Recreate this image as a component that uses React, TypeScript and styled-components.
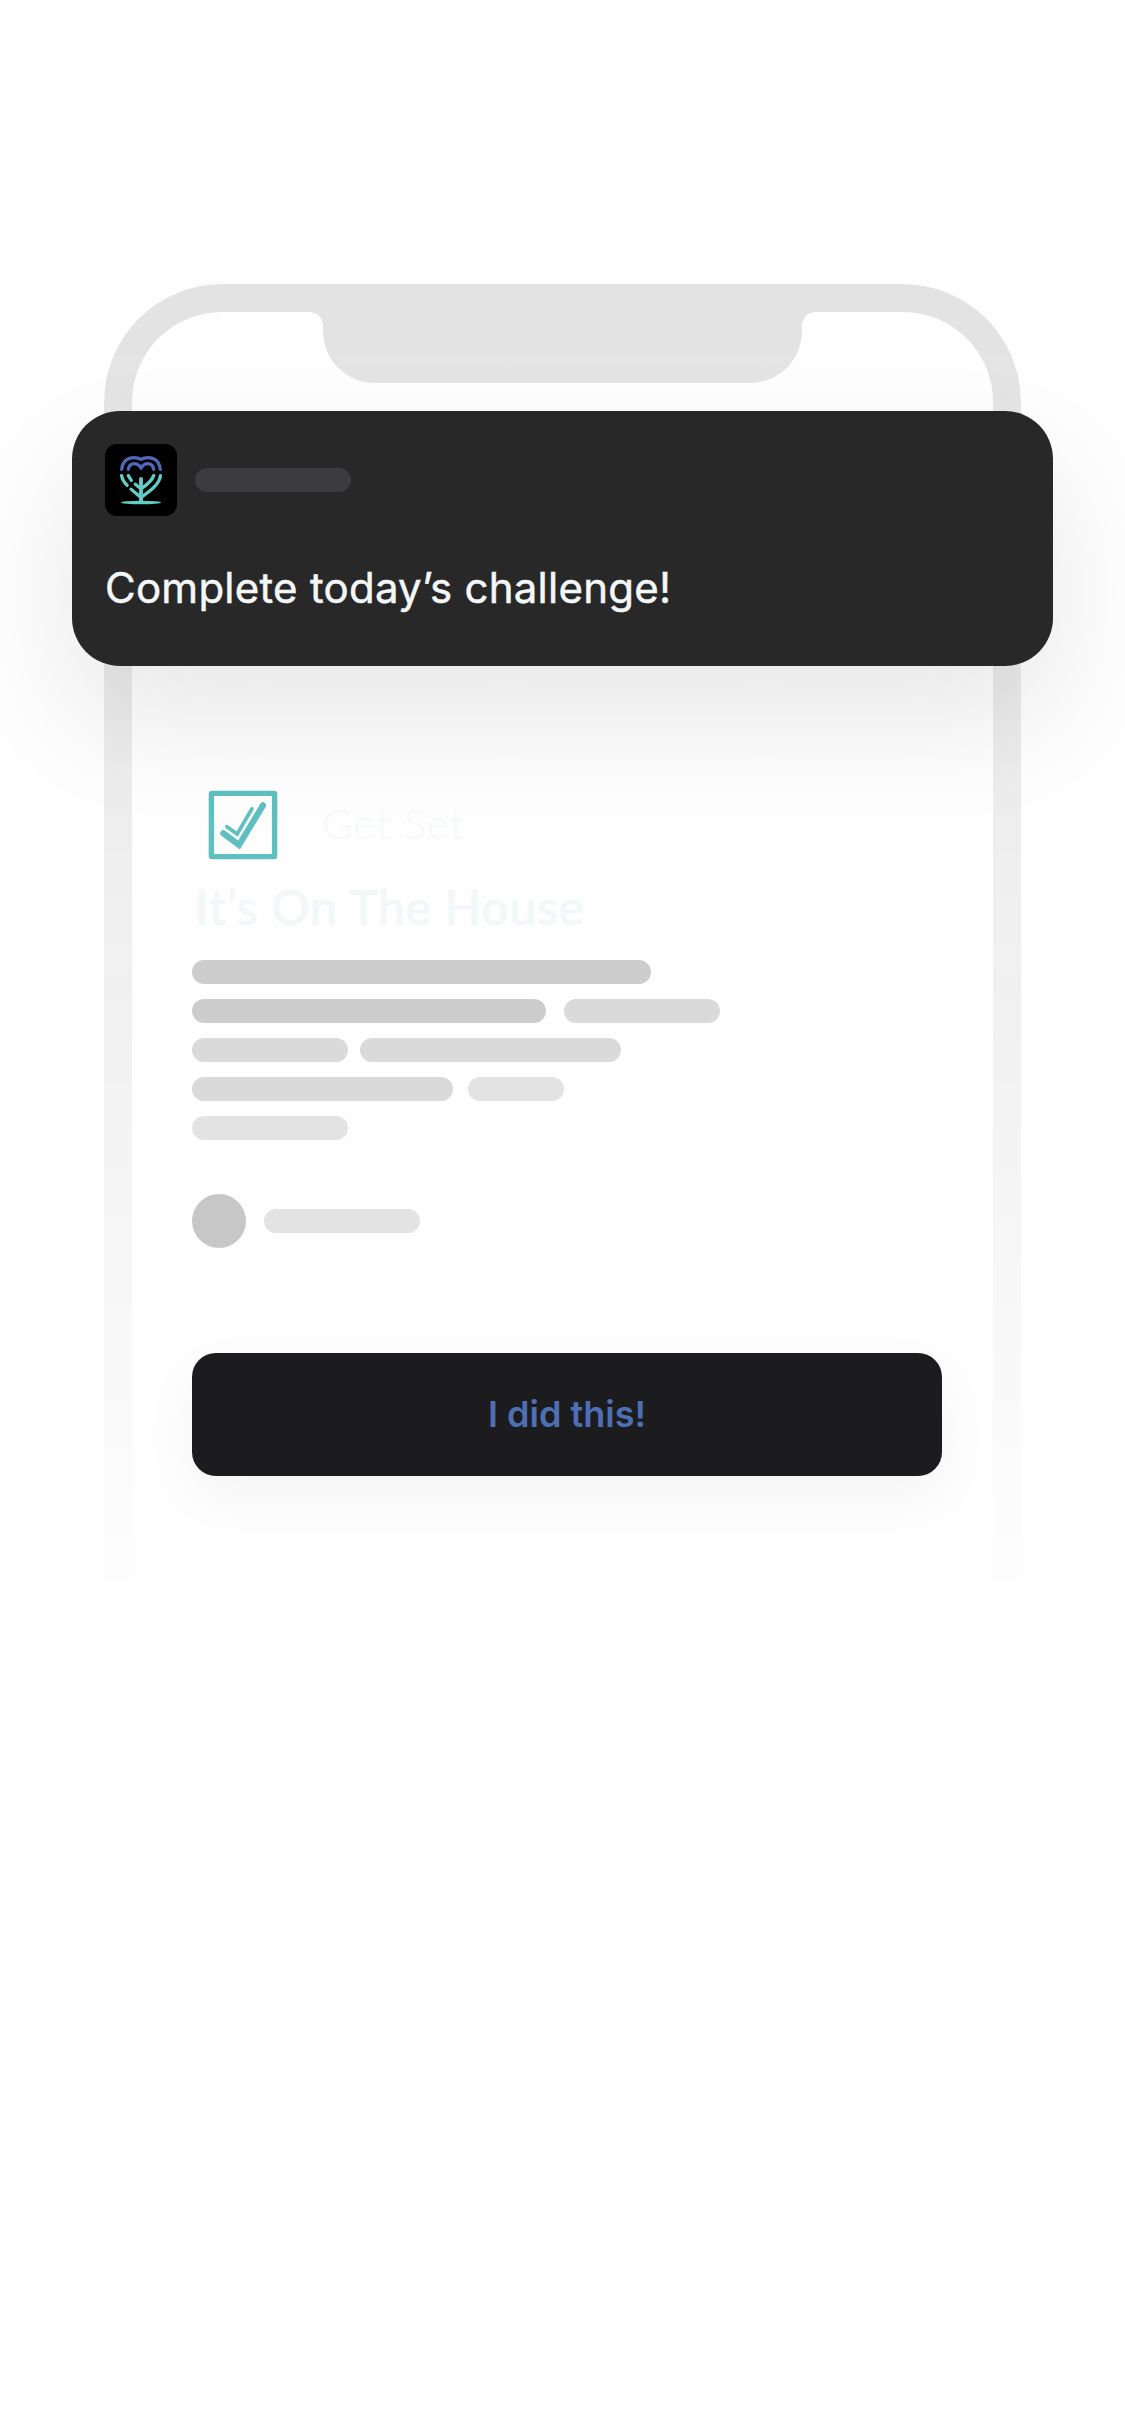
import React from "react";
import styled, { createGlobalStyle } from "styled-components";

const GlobalStyle = createGlobalStyle`
  *, *::before, *::after { box-sizing: border-box; }
  body { margin: 0; background: #fefefe; }
`;

const Page = styled.main`
  width: 1125px;
  height: 2436px;
  padding: 284px 104px 0;
  overflow: hidden;
  background: #fefefe;
  font-family: Inter, "Liberation Sans", sans-serif;
`;

const Phone = styled.section`
  position: relative;
  height: 1296px;
  padding: 127px 0 0;
`;

const Frame = styled.div`
  position: absolute;
  inset: 0;
  display: flex;
  justify-content: center;
  align-items: flex-start;
  border: 28px solid #e3e3e3;
  border-bottom: 0;
  border-radius: 118px 118px 0 0;
  mask-image: linear-gradient(to bottom, #000 0, #000 50px, transparent 1320px);
`;

const Notch = styled.div`
  position: relative;
  width: 479px;
  height: 71px;
  border-radius: 0 0 52px 52px;
  background: #e3e3e3;

  &::before,
  &::after {
    content: "";
    position: absolute;
    top: 0;
    width: 13px;
    height: 13px;
  }
  &::before {
    right: 100%;
    background: radial-gradient(circle at 0 100%, transparent 12.5px, #e3e3e3 13px);
  }
  &::after {
    left: 100%;
    background: radial-gradient(circle at 100% 100%, transparent 12.5px, #e3e3e3 13px);
  }
`;

const Notification = styled.article`
  position: relative;
  z-index: 1;
  display: flex;
  flex-direction: column;
  gap: 47px;
  width: 981px;
  height: 255px;
  margin-left: -32px;
  padding: 33px;
  border-radius: 48px;
  background: #282828;
  box-shadow: 0 54px 120px rgba(0, 0, 0, 0.09);
`;

const NotificationHeader = styled.header`
  display: flex;
  align-items: center;
  gap: 18px;
`;

const AppBadge = styled.div`
  display: flex;
  width: 72px;
  height: 72px;
  border-radius: 12px;
  background: #000;
`;

const Message = styled.p`
  margin: 0;
  color: #f4f7f8;
  font-size: 42px;
  line-height: 50px;
  font-weight: 400;
  letter-spacing: 0.25px;
  -webkit-text-stroke: 0.5px #f4f7f8;
  white-space: nowrap;
`;

const Content = styled.div`
  position: relative;
  display: flex;
  flex-direction: column;
  padding: 124px 79px 0 88px;
`;

const TitleRow = styled.div`
  display: flex;
  align-items: center;
  gap: 44px;
  height: 70px;
  padding-left: 16px;
`;

const Category = styled.span`
  padding-bottom: 4px;
  color: #f6f9fa;
  font-family: Lato, sans-serif;
  font-size: 42px;
  font-weight: 300;
  letter-spacing: 0.9px;
  -webkit-text-stroke: 0.3px #f6f9fa;
`;

const Title = styled.h1`
  margin: 17px 0 0 3px;
  height: 62px;
  color: #f3f7f8;
  font-family: Lato, sans-serif;
  font-size: 48px;
  line-height: 60px;
  font-weight: 500;
  letter-spacing: 0.75px;
  -webkit-text-stroke: 0.7px #f3f7f8;
  white-space: nowrap;
`;

const Lines = styled.div`
  display: flex;
  flex-direction: column;
  gap: 15px;
  margin-top: 21px;
`;

const Line = styled.div<{ $gap?: number }>`
  display: flex;
  gap: ${(p) => p.$gap ?? 0}px;
`;

const Bar = styled.span<{ $width: number; $color: string }>`
  width: ${(p) => p.$width}px;
  height: 24px;
  border-radius: 12px;
  background: ${(p) => p.$color};
`;

const Author = styled.div`
  display: flex;
  align-items: center;
  gap: 18px;
  margin-top: 54px;
`;

const Avatar = styled.span`
  width: 54px;
  height: 54px;
  border-radius: 50%;
  background: #c7c7c7;
`;

const Action = styled.button`
  width: 750px;
  height: 123px;
  margin-top: 105px;
  padding: 0 0 2px;
  border: 0;
  border-radius: 24px;
  background: #1c1c1e;
  box-shadow: 0 20px 56px rgba(0, 0, 0, 0.042);
  color: #4f6fb4;
  font: 600 36px/44px Inter, "Liberation Sans", sans-serif;
`;

const dark = "#cdcdcd";
const mid = "#dadada";
const light = "#e3e3e3";

const TreeLogo = () => (
  <svg width="72" height="72" viewBox="0 0 72 72" fill="none" strokeWidth="3.3" strokeLinecap="round">
    <g stroke="#4f68bb">
      <path d="M16.7 25.3C17.5 17.5 22.5 13.6 29 13.6C31.6 13.6 34 14.2 36 15.4C38 14.2 40.4 13.6 43 13.6C49.5 13.6 54.5 17.5 55.3 25.3" />
      <path d="M23.3 25.3C23.9 21.6 26.5 19.6 29.4 19.6C32.2 19.6 34.2 21.2 36 23.8C37.8 21.2 39.8 19.6 42.6 19.6C45.5 19.6 48.1 21.6 48.7 25.3" />
    </g>
    <g stroke="#62cdc8">
      <path d="M16.6 31.6C17.2 35.5 19.2 38.7 22.1 41.3" />
      <path d="M23.3 31.6L26.3 36.4" />
      <path d="M26 45.2C29 48.2 33 50.5 36 53.5C43 48.5 54.5 41 55.4 31.6" />
      <path d="M30.2 40.2C32 42 34.2 42.8 36 44.8C41 41.5 46.5 37.5 48.7 31.6" />
      <path d="M36 34.8V58" strokeWidth="3.8" />
    </g>
    <ellipse cx="36" cy="58.5" rx="20" ry="1.7" fill="#62cdc8" />
  </svg>
);

const CheckLogo = () => (
  <svg width="70" height="70" viewBox="0 0 70 70" fill="none" stroke="#5fbfc1" strokeLinecap="round">
    <rect x="3.4" y="3.4" width="63.2" height="63.2" rx="0.5" strokeWidth="5.4" strokeLinejoin="round" />
    <path d="M15.3 43.3L31 55L55 15.3" strokeWidth="6.2" />
    <path d="M18.9 36.7L29.2 44L43.9 18.9" strokeWidth="3.7" />
  </svg>
);

export default function App() {
  return (
    <Page>
      <GlobalStyle />
      <Phone>
        <Frame>
          <Notch />
        </Frame>
        <Notification>
          <NotificationHeader>
            <AppBadge>
              <TreeLogo />
            </AppBadge>
            <Bar $width={156} $color="#3c3c3e" />
          </NotificationHeader>
          <Message>Complete today’s challenge!</Message>
        </Notification>
        <Content>
          <TitleRow>
            <CheckLogo />
            <Category>Get Set</Category>
          </TitleRow>
          <Title>It’s On The House</Title>
          <Lines>
            <Line>
              <Bar $width={459} $color={dark} />
            </Line>
            <Line $gap={18}>
              <Bar $width={354} $color={dark} />
              <Bar $width={156} $color={mid} />
            </Line>
            <Line $gap={12}>
              <Bar $width={156} $color={mid} />
              <Bar $width={261} $color={mid} />
            </Line>
            <Line $gap={15}>
              <Bar $width={261} $color={mid} />
              <Bar $width={96} $color={light} />
            </Line>
            <Line>
              <Bar $width={156} $color={light} />
            </Line>
          </Lines>
          <Author>
            <Avatar />
            <Bar $width={156} $color={light} />
          </Author>
          <Action type="button">I did this!</Action>
        </Content>
      </Phone>
    </Page>
  );
}
